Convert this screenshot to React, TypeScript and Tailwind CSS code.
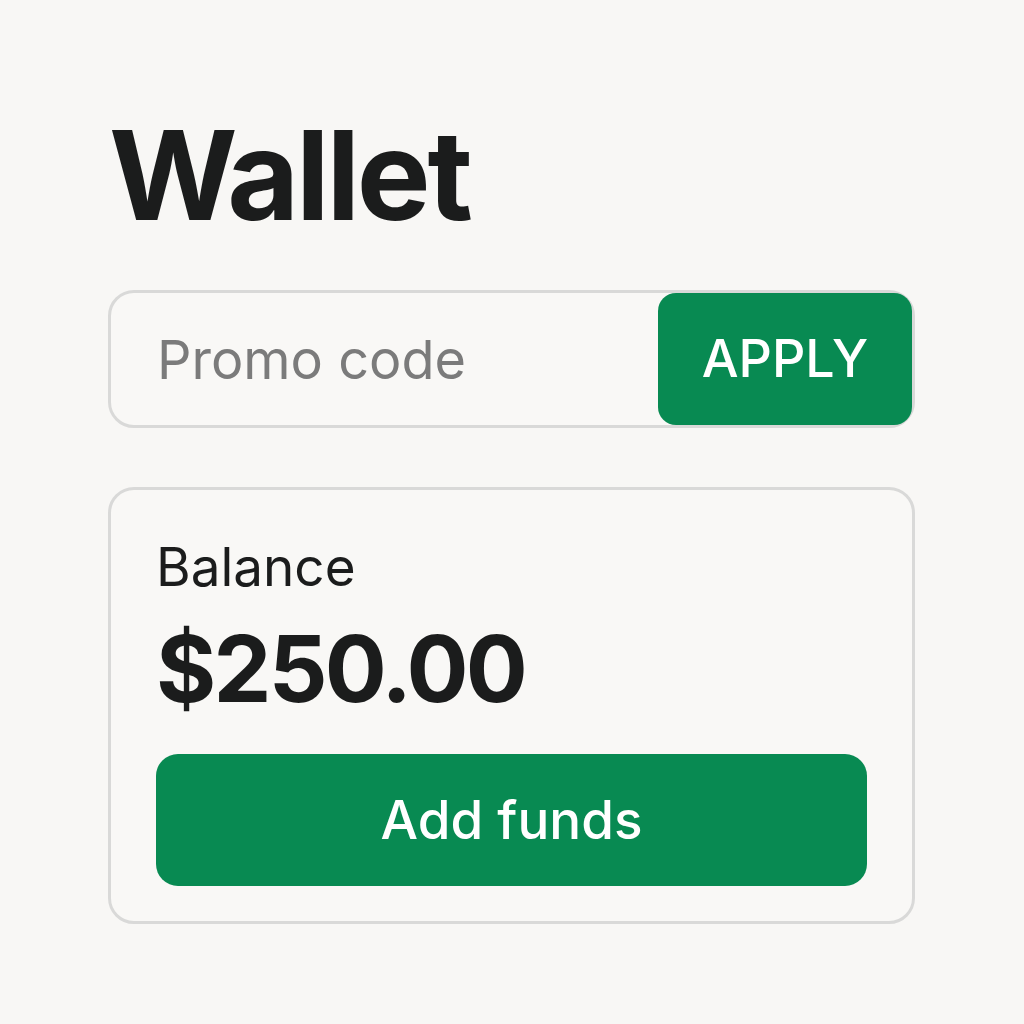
import React from 'react';

const App: React.FC = () => {
  return (
    <div className="min-h-screen w-full bg-[#f8f7f5] font-['Inter','Liberation_Sans',sans-serif] text-[#1b1c1c]">
      <div className="pl-[108px] pr-[109px] pt-[113px]">
        <h1 className="text-[124px] leading-none font-bold tracking-[-0.026em] pl-[1px]">Wallet</h1>

        {/* Promo code */}
        <div className="mt-[53px] h-[138px] flex items-stretch rounded-[26px] border-[3px] border-[#d9d9d8] bg-[#f9f8f6]">
          <input
            placeholder="Promo code"
            className="flex-1 min-w-0 bg-transparent pl-[46px] text-[54px] leading-none outline-none placeholder:text-[#7b7b7b]"
          />
          <button className="w-[254px] rounded-[18px] bg-[#088a52] text-white text-[52px] leading-none font-medium">
            APPLY
          </button>
        </div>

        {/* Balance card */}
        <div className="mt-[59px] rounded-[26px] border-[3px] border-[#d9d9d8] bg-[#f9f8f6] px-[45px] pt-[51px] pb-[35px]">
          <div className="text-[53px] leading-none">Balance</div>
          <div className="mt-[29px] text-[92px] leading-none font-bold tracking-[-0.03em]">$250.00</div>
          <button className="mt-[39px] h-[132px] w-full rounded-[22px] bg-[#088a52] text-white text-[53px] leading-none font-medium">
            Add funds
          </button>
        </div>
      </div>
    </div>
  );
};

export default App;
